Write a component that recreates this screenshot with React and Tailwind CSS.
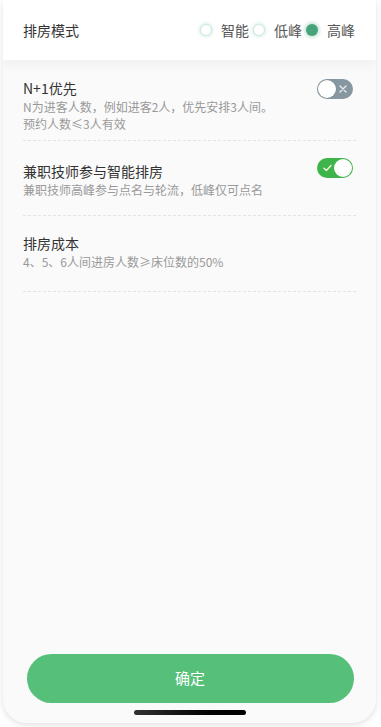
import React from "react";

const font = { fontFamily: '"Noto Sans CJK SC", "Noto Sans", sans-serif' };

function Radio({ checked, label, last }) {
  return (
    <div className="flex items-center">
      {checked ? (
        <span className="block w-[12px] h-[12px] rounded-full bg-[#47a47a] shadow-[0_0_3px_2px_rgba(71,164,122,0.25)]" />
      ) : (
        <span className="block w-[12px] h-[12px] rounded-full bg-white border border-[#cfeadb] shadow-[0_0_3px_1px_rgba(120,200,160,0.3)]" />
      )}
      <span className={last ? "ml-[9px] text-[14px] leading-[20px] text-[#555]" : "ml-[9px] mr-[4px] text-[14px] leading-[20px] text-[#555]"}>{label}</span>
    </div>
  );
}

function ToggleOff() {
  return (
    <div className="relative w-[36px] h-[20px] rounded-full bg-[#8797a1] shrink-0">
      <span className="absolute left-[1px] top-[1px] w-[18px] h-[18px] rounded-full bg-white shadow-[0_0_1px_rgba(0,0,0,0.3)]" />
      <svg className="absolute right-[6px] top-[6px]" width="8" height="8" viewBox="0 0 8 8">
        <path d="M1 1L7 7M7 1L1 7" stroke="#e8eef2" strokeWidth="1.3" strokeLinecap="round" />
      </svg>
    </div>
  );
}

function ToggleOn() {
  return (
    <div className="relative w-[36px] h-[20px] rounded-full bg-[#3db54a] shrink-0">
      <span className="absolute right-[1px] top-[1px] w-[18px] h-[18px] rounded-full bg-white" />
      <svg className="absolute left-[6px] top-[6px]" width="9" height="8" viewBox="0 0 9 8">
        <path d="M1 4.2L3.4 6.4L8 1.6" stroke="#f2f6d8" strokeWidth="1.4" fill="none" strokeLinecap="round" strokeLinejoin="round" />
      </svg>
    </div>
  );
}

export default function App() {
  return (
    <div className="w-[381px] h-[727px] bg-white" style={font}>
      <div className="ml-[3px] w-[373px] h-[723px] rounded-b-[24px] bg-[#fafafa] shadow-[0_2px_6px_rgba(0,0,0,0.12)] overflow-hidden flex flex-col">
        <div className="h-[60px] bg-white flex items-center justify-between pl-[20px] pr-[21px] shadow-[0_4px_14px_rgba(0,0,0,0.05)] relative z-10">
          <span className="text-[14px] leading-[20px] text-[#333]">排房模式</span>
          <div className="flex items-center">
            <Radio label="智能" />
            <Radio label="低峰" />
            <Radio checked last label="高峰" />
          </div>
        </div>

        <div className="flex-1 flex flex-col px-[20px]">
          <div className="pt-[18px] pb-[8px] border-b border-dashed border-[#e3e3e3] flex justify-between">
            <div>
              <div className="text-[14px] leading-[20px] text-[#333]">N+1优先</div>
              <div className="text-[12px] leading-[17px] text-[#999]">N为进客人数，例如进客2人，优先安排3人间。</div>
              <div className="text-[12px] leading-[17px] text-[#999]">预约人数≤3人有效</div>
            </div>
            <div className="pt-[1px] pr-[3px]"><ToggleOff /></div>
          </div>

          <div className="pt-[20px] pb-[17px] border-b border-dashed border-[#e3e3e3] flex justify-between">
            <div>
              <div className="text-[14px] leading-[20px] text-[#333]">兼职技师参与智能排房</div>
              <div className="text-[12px] leading-[17px] text-[#999]">兼职技师高峰参与点名与轮流，低峰仅可点名</div>
            </div>
            <div className="-mt-[3px] pr-[3px]"><ToggleOn /></div>
          </div>

          <div className="pt-[17px] pb-[21px] border-b border-dashed border-[#e3e3e3]">
            <div className="text-[14px] leading-[20px] text-[#333]">排房成本</div>
            <div className="text-[12px] leading-[17px] text-[#999]">4、5、6人间进房人数≥床位数的50%</div>
          </div>

          <div className="flex-1" />

          <div className="flex justify-center">
            <button className="w-[327px] h-[49px] rounded-full bg-[#56c07a] text-white text-[15px] ml-[1px]">确定</button>
          </div>
          <div className="flex justify-center pt-[7px] pb-[8px]">
            <span className="block w-[112px] h-[5px] rounded-full bg-gradient-to-r from-[#333] to-[#000]" />
          </div>
        </div>
      </div>
    </div>
  );
}
